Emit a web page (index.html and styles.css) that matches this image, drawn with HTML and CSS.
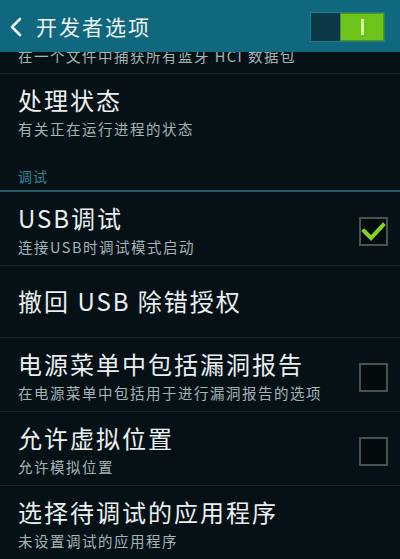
FILE: index.html
```html
<!DOCTYPE html>
<html lang="zh-CN">
<head>
<meta charset="UTF-8">
<meta name="viewport" content="width=device-width, initial-scale=1.0">
<title>开发者选项</title>
<link rel="stylesheet" href="styles.css">
</head>
<body>

<div class="header">
  <svg class="back" width="14" height="20" viewBox="0 0 14 20">
    <path d="M11 2 L3 10 L11 18" fill="none" stroke="#eef3f4" stroke-width="2.6" stroke-linecap="round" stroke-linejoin="round"/>
  </svg>
  <h1 class="title">开发者选项</h1>
  <div class="switch">
    <div class="switch-off"></div>
    <div class="switch-on"><span class="switch-bar"></span></div>
  </div>
</div>

<div class="list">
  <div class="item partial">
    <p class="sub">在一个文件中捕获所有蓝牙 HCI 数据包</p>
  </div>

  <div class="item no-line">
    <div class="text">
      <p class="name">处理状态</p>
      <p class="sub">有关正在运行进程的状态</p>
    </div>
  </div>

  <div class="section">调试</div>

  <div class="item">
    <div class="text">
      <p class="name">USB调试</p>
      <p class="sub">连接USB时调试模式启动</p>
    </div>
    <div class="check checked">
      <svg width="25" height="25" viewBox="0 0 25 25">
        <path d="M3 12 L10 19 L22 6" fill="none" stroke="#84d31c" stroke-width="4" stroke-linecap="square"/>
      </svg>
    </div>
  </div>

  <div class="item single">
    <div class="text">
      <p class="name">撤回 USB 除错授权</p>
    </div>
  </div>

  <div class="item">
    <div class="text">
      <p class="name">电源菜单中包括漏洞报告</p>
      <p class="sub">在电源菜单中包括用于进行漏洞报告的选项</p>
    </div>
    <div class="check"></div>
  </div>

  <div class="item">
    <div class="text">
      <p class="name">允许虚拟位置</p>
      <p class="sub">允许模拟位置</p>
    </div>
    <div class="check"></div>
  </div>

  <div class="item">
    <div class="text">
      <p class="name">选择待调试的应用程序</p>
      <p class="sub">未设置调试的应用程序</p>
    </div>
  </div>
</div>

</body>
</html>
```

FILE: styles.css
```css
  body {
    margin: 0;
    background-color: #061117;
    font-family: "Noto Sans CJK SC", "Noto Sans", sans-serif;
    color: #eceff0;
    height: 559px;
    overflow: hidden;
  }
  p {
    margin: 0;
  }

  .header {
    display: flex;
    align-items: center;
    height: 52px;
    background-color: #0f687d;
    padding: 0 15px 0 9px;
    box-sizing: border-box;
  }
  .back {
    display: block;
    margin-top: 2px;
  }
  .title {
    flex: 1;
    margin: 0 0 0 13px;
    font-size: 21px;
    font-weight: normal;
    letter-spacing: 2px;
    color: #eef3f4;
  }
  .switch {
    display: flex;
    width: 75px;
    height: 30px;
    border: 1px solid #2a7a8c;
    box-sizing: border-box;
    margin-top: 1px;
  }
  .switch-off {
    width: 29px;
    background-color: #0b3845;
  }
  .switch-on {
    flex: 1;
    display: flex;
    justify-content: center;
    align-items: center;
    background-color: #6cc41b;
    border: 1px solid #4c9a14;
  }
  .switch-bar {
    width: 3px;
    height: 16px;
    background-color: #d9f7a4;
  }

  .list {
    height: 507px;
    overflow: hidden;
  }
  .item {
    display: flex;
    align-items: center;
    padding: 11px 12px 8px 18px;
    border-bottom: 1px solid #1a272c;
  }
  .item.partial {
    height: 21px;
    padding: 0 18px;
    overflow: hidden;
    align-items: flex-start;
  }
  .item.partial .sub {
    margin-top: -6px;
  }
  .item.no-line {
    border-bottom: none;
  }
  .item.single {
    padding-top: 20px;
    padding-bottom: 21px;
  }
  .text {
    flex: 1;
  }
  .name {
    font-size: 24px;
    line-height: 30px;
    letter-spacing: 2px;
    color: #eceff0;
  }
  .sub {
    margin-top: 4px;
    font-size: 14.5px;
    line-height: 20px;
    letter-spacing: 1.5px;
    color: #a9b2b5;
  }

  .section {
    padding: 19px 18px 4px;
    font-size: 14px;
    line-height: 20px;
    letter-spacing: 1px;
    color: #2d8897;
    border-bottom: 2px solid #1c5b67;
  }

  .check {
    width: 29px;
    height: 29px;
    box-sizing: border-box;
    border: 2px solid #48534f;
    background-color: #040b0f;
    display: flex;
    align-items: center;
    justify-content: center;
    margin-top: 2px;
  }
```
